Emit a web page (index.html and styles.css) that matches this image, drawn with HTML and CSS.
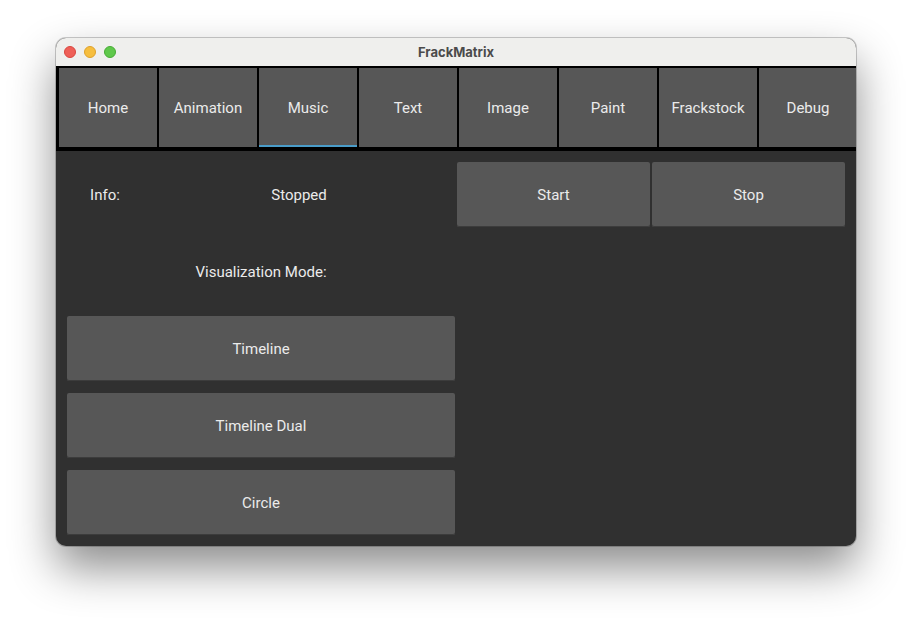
FILE: index.html
```html
<!DOCTYPE html>
<html>
<head>
<meta charset="utf-8">
<title>FrackMatrix</title>
<link rel="stylesheet" href="styles.css">
</head>
<body>
<div class="window">
  <div class="titlebar">
    <div class="lights">
      <span class="light red"></span>
      <span class="light yellow"></span>
      <span class="light green"></span>
    </div>
    <div class="title">FrackMatrix</div>
  </div>
  <div class="tabbar">
    <div class="tab">Home</div>
    <div class="tab">Animation</div>
    <div class="tab active">Music</div>
    <div class="tab">Text</div>
    <div class="tab">Image</div>
    <div class="tab">Paint</div>
    <div class="tab">Frackstock</div>
    <div class="tab">Debug</div>
  </div>
  <div class="content">
    <div class="col left">
      <div class="row info">
        <div class="info-label">Info:</div>
        <div class="info-value">Stopped</div>
      </div>
      <div class="row label">Visualization Mode:</div>
      <div class="row btn">Timeline</div>
      <div class="row btn">Timeline Dual</div>
      <div class="row btn">Circle</div>
    </div>
    <div class="col right">
      <div class="row controls">
        <div class="btn">Start</div>
        <div class="btn">Stop</div>
      </div>
    </div>
  </div>
</div>
</body>
</html>
```

FILE: styles.css
```css
html, body {
  margin: 0;
  padding: 0;
  background: #ffffff;
}
body {
  padding: 38px 0 80px 56px;
  font-family: Roboto, "Liberation Sans", sans-serif;
}
.window {
  width: 800px;
  height: 508px;
  border-radius: 10px;
  overflow: hidden;
  background: #303030;
  box-shadow: 0 0 0 1px rgba(0,0,0,0.2), 0 22px 45px rgba(0,0,0,0.45);
  display: flex;
  flex-direction: column;
}
.titlebar {
  height: 28px;
  background: #efefed;
  display: flex;
  align-items: center;
  position: relative;
  flex: none;
}
.lights {
  display: flex;
  gap: 8px;
  padding-left: 8px;
}
.light {
  width: 12px;
  height: 12px;
  border-radius: 50%;
  box-sizing: border-box;
}
.red { background: #ee5f57; border: 0.5px solid #d9463e; }
.yellow { background: #f6be3e; border: 0.5px solid #dea12a; }
.green { background: #5fc84b; border: 0.5px solid #47ab35; }
.title {
  position: absolute;
  left: 0;
  right: 0;
  top: 0;
  line-height: 28px;
  text-align: center;
  font-size: 13px;
  font-weight: 700;
  color: #4b4b4b;
  font-family: Inter, "Open Sans", "Liberation Sans", sans-serif;
}
.tabbar {
  height: 85px;
  background: #000000;
  display: flex;
  gap: 2px;
  padding: 2px 0 4px 3px;
  box-sizing: border-box;
  overflow: hidden;
  flex: none;
}
.tab {
  width: 98px;
  flex: none;
  background: #575757;
  color: #ebebeb;
  font-size: 15px;
  display: flex;
  align-items: center;
  justify-content: center;
  box-sizing: border-box;
}
.tab.active {
  border-bottom: 2px solid #4a9cc9;
  padding-top: 2px;
}
.content {
  flex: 1;
  display: flex;
  gap: 2px;
  padding: 11px 11px 11px 11px;
}
.col {
  width: 388px;
  display: flex;
  flex-direction: column;
  gap: 12px;
}
.row {
  height: 65px;
  flex: none;
  color: #ebebeb;
  font-size: 15px;
}
.info {
  display: flex;
  align-items: center;
}
.info-label {
  width: 76px;
  text-align: center;
}
.info-value {
  flex: 1;
  text-align: center;
}
.label {
  display: flex;
  align-items: center;
  justify-content: center;
}
.btn {
  background: #575757;
  color: #ebebeb;
  font-size: 15px;
  border-radius: 2px;
  box-shadow: inset 0 -1px 0 #3c3c3c;
  display: flex;
  align-items: center;
  justify-content: center;
}
.controls {
  display: flex;
  gap: 2px;
}
.controls .btn {
  flex: 1;
}
```
